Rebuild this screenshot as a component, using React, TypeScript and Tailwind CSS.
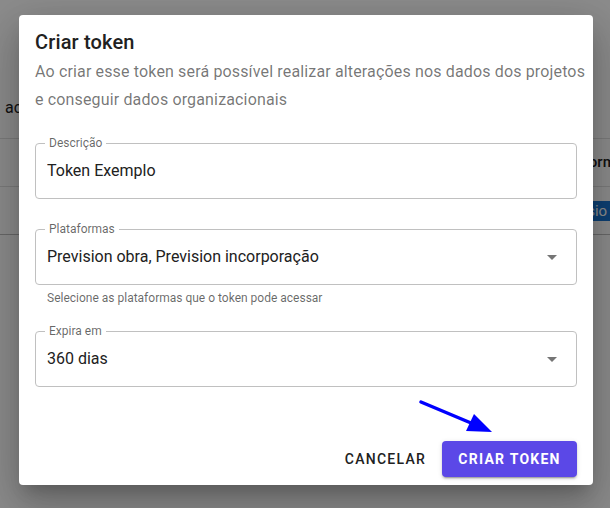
import React from 'react';

function OutlinedField({
  label,
  value,
  select,
}: {
  label: string;
  value: string;
  select?: boolean;
}): React.JSX.Element {
  return (
    <div className="relative h-[56px] rounded border border-[#c0c0c0] flex items-center pl-[11px] pr-[12px]">
      <span className="absolute -top-[9px] left-[9px] bg-white px-[4px] text-[12px] leading-[16px] text-black/60">
        {label}
      </span>
      <span className="flex-1 text-[16px] text-[#212121] leading-6 truncate">{value}</span>
      {select && (
        <svg width="24" height="24" viewBox="0 0 24 24" aria-hidden className="text-[#757575]">
          <path d="M7 10l5 5 5-5z" fill="currentColor" />
        </svg>
      )}
    </div>
  );
}

export default function App(): React.JSX.Element {
  return (
    <div className="relative w-[610px] h-[508px] overflow-hidden bg-white font-['Roboto',sans-serif]">
      {/* page behind the modal */}
      <div className="pt-[96px]">
        <p className="pl-[5px] text-[16px] leading-6 text-[#212121] whitespace-nowrap">ac</p>
        <div className="mt-[18px] border-t border-[#e0e0e0]">
          <div className="h-[48px] flex items-center pl-[549px] border-b border-[#e0e0e0] text-[15px] font-medium text-[#212121] whitespace-nowrap">
            Plataformas
          </div>
          <div className="h-[48px] flex items-center pl-[548px] border-b border-[#bdbdbd] whitespace-nowrap">
            <span className="h-[20px] px-[6px] rounded-sm bg-[#1976d2] text-white text-[15px] leading-[20px]">
              Previsio obra
            </span>
          </div>
        </div>
      </div>

      <div className="absolute inset-0 bg-black/45" />

      <div
        role="dialog"
        className="absolute left-[19px] top-[15px] w-[574px] h-[470px] bg-white rounded shadow-[0_11px_15px_-7px_rgba(0,0,0,0.2),0_24px_38px_3px_rgba(0,0,0,0.14),0_9px_46px_8px_rgba(0,0,0,0.12)] flex flex-col"
      >
        <div className="pt-[11px] pl-4 pr-[4px]">
          <h2 className="text-[20px] leading-8 font-medium tracking-[0.15px] text-[#212121]">Criar token</h2>
          <p className="text-[16px] leading-[28px] tracking-[0.15px] text-black/55">
            Ao criar esse token será possível realizar alterações nos dados dos projetos e conseguir dados
            organizacionais
          </p>
        </div>

        <div className="px-4 mt-[29px]">
          <OutlinedField label="Descrição" value="Token Exemplo" />
          <div className="mt-[30px]">
            <OutlinedField label="Plataformas" value="Prevision obra, Prevision incorporação" select />
            <p className="mt-[3px] ml-[12px] text-[12px] leading-5 text-black/60">
              Selecione as plataformas que o token pode acessar
            </p>
          </div>
          <div className="mt-[23px]">
            <OutlinedField label="Expira em" value="360 dias" select />
          </div>
        </div>

        <div className="flex-1" />

        <div className="flex items-center justify-end gap-2 pr-4 pb-2">
          <button
            type="button"
            className="h-[36px] px-2 rounded text-[14px] font-medium tracking-[1.25px] text-[#212121]"
          >
            CANCELAR
          </button>
          <button
            type="button"
            className="h-[36px] w-[135px] rounded bg-[#5b48e7] text-white text-[14px] font-bold tracking-[1.25px] shadow-[0_3px_1px_-2px_rgba(0,0,0,0.2),0_2px_2px_0_rgba(0,0,0,0.14),0_1px_5px_0_rgba(0,0,0,0.12)]"
          >
            CRIAR TOKEN
          </button>
        </div>
      </div>

      {/* annotation arrow */}
      <svg
        className="absolute left-0 top-0 pointer-events-none"
        width="610"
        height="508"
        viewBox="0 0 610 508"
        aria-hidden
      >
        <line x1="421" y1="402" x2="471" y2="423" stroke="#0000ff" strokeWidth="3.5" strokeLinecap="round" />
        <polygon points="492,432 466,431 474,414" fill="#0000ff" />
      </svg>
    </div>
  );
}
